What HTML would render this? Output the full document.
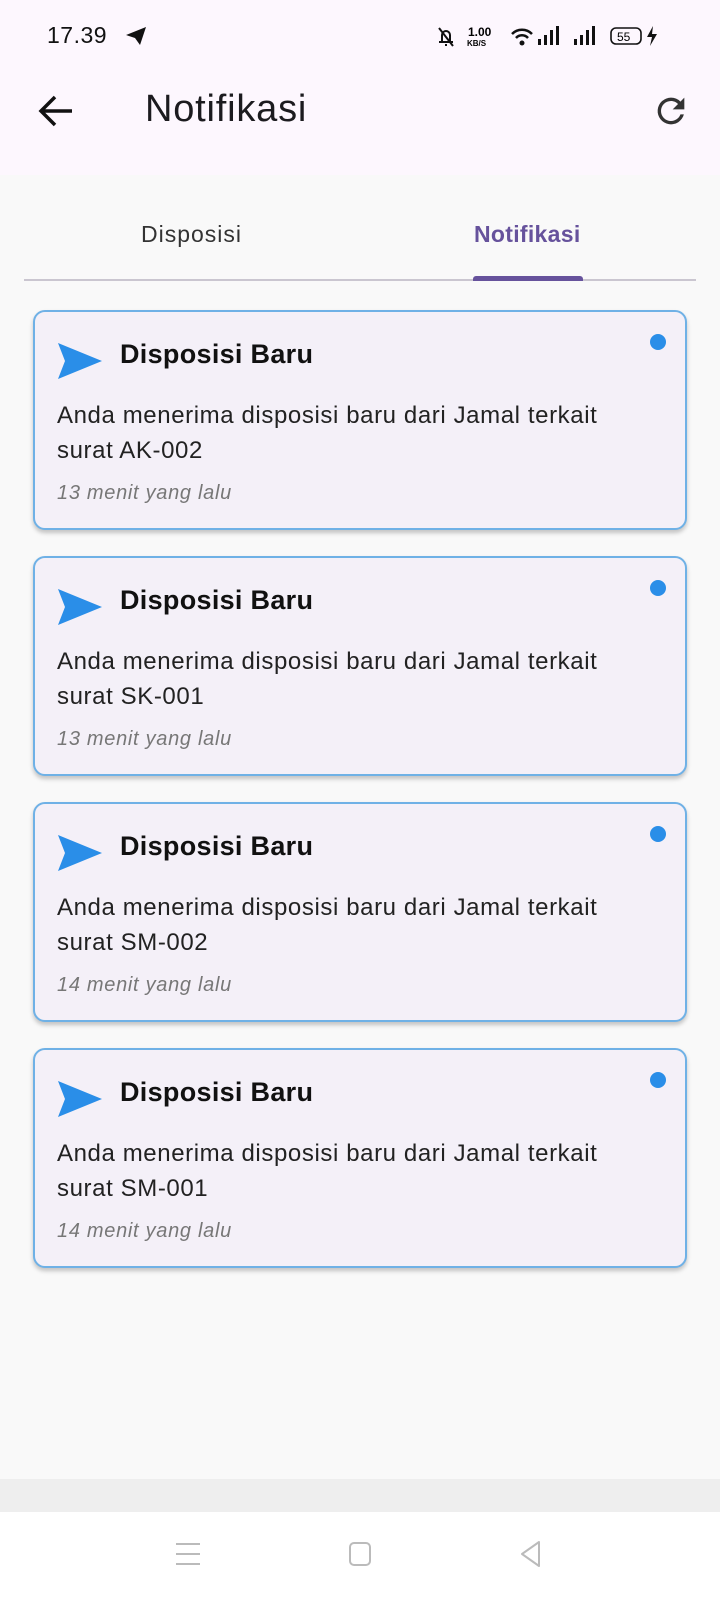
<!DOCTYPE html>
<html><head><meta charset="utf-8"><style>
*{margin:0;padding:0;box-sizing:border-box}
body{width:720px;height:1600px;overflow:hidden;font-family:"Liberation Sans",Roboto,sans-serif;background:#f9f9f9;position:relative}
.top{position:absolute;left:0;top:0;width:720px;height:175px;background:#fdf7fe}
.abs{position:absolute}
.card{position:absolute;left:33px;width:654px;height:220px;background:#f4f0f8;border:2px solid #6fb1e6;border-radius:12px;box-shadow:0 3px 4px rgba(0,0,0,0.22)}
.card .ic{position:absolute;left:22px;top:30px}
.card h3{position:absolute;left:85px;top:27px;font-size:27px;font-weight:bold;color:#111;letter-spacing:0.3px}
.card p{position:absolute;left:22px;top:86px;font-size:24px;line-height:35px;color:#222;width:590px;letter-spacing:0.6px}
.card .t{position:absolute;left:22px;top:170px;font-size:20px;font-style:italic;color:#777;letter-spacing:0.7px}
.card .dot{position:absolute;left:615px;top:22px;width:16px;height:16px;border-radius:50%;background:#2a8ee8}
</style></head><body>
<div class="top"></div>
<div class="abs" style="left:47px;top:22px;font-size:23px;color:#111;letter-spacing:0.5px">17.39</div>
<svg class="abs" style="left:125px;top:26px" width="22" height="20" viewBox="0 0 22 20"><path d="M1 9 L21 1 L15 19 L10 12 Z" fill="#111"/></svg>
<svg class="abs" style="left:436px;top:24px" width="240" height="26" viewBox="0 0 240 26">
<path d="M3 18 h14 M6 18 v-7 a4 4 0 0 1 8 0 v7 M10 20 v2 M3 4 L17 22" stroke="#111" stroke-width="2" fill="none"/>
<text x="32" y="12" font-size="12" font-weight="bold" font-family="Liberation Sans">1.00</text>
<text x="31" y="22" font-size="8" font-weight="bold" font-family="Liberation Sans">KB/S</text>
<path d="M76 10 a14 14 0 0 1 20 0 M80 14 a8 8 0 0 1 12 0" stroke="#111" stroke-width="2.5" fill="none"/><circle cx="86" cy="19" r="2.5" fill="#111"/>
<rect x="102" y="15" width="3" height="6" fill="#111"/><rect x="108" y="11" width="3" height="10" fill="#111"/><rect x="114" y="6" width="3" height="15" fill="#111"/><rect x="120" y="2" width="3" height="19" fill="#111"/>
<rect x="138" y="15" width="3" height="6" fill="#111"/><rect x="144" y="11" width="3" height="10" fill="#111"/><rect x="150" y="6" width="3" height="15" fill="#111"/><rect x="156" y="2" width="3" height="19" fill="#111"/>
<rect x="175" y="4" width="30" height="16" rx="5" fill="none" stroke="#111" stroke-width="1.6"/><text x="181" y="17" font-size="12" font-family="Liberation Sans">55</text>
<path d="M217 2 L211 13 h5 l-2 9 l7 -12 h-5 z" fill="#111"/>
</svg>
<svg class="abs" style="left:38px;top:94px" width="36" height="34" viewBox="0 0 36 34"><path d="M34 17 H4 M17 3 L3 17 L17 31" stroke="#111" stroke-width="3.5" fill="none"/></svg>
<div class="abs" style="left:145px;top:88px;font-size:38px;color:#1c1b1f;letter-spacing:0.8px">Notifikasi</div>
<svg class="abs" style="left:651px;top:91px" width="40" height="40" viewBox="0 0 24 24"><path d="M17.65 6.35A7.958 7.958 0 0 0 12 4a8 8 0 1 0 7.73 10h-2.08A5.99 5.99 0 0 1 12 18a6 6 0 1 1 0-12c1.66 0 3.14.69 4.22 1.78L13 11h7V4l-2.35 2.35z" fill="#333"/></svg>
<div class="abs" style="left:141px;top:221px;font-size:23px;color:#333;letter-spacing:1px">Disposisi</div>
<div class="abs" style="left:474px;top:221px;font-size:23px;font-weight:bold;color:#66529c;letter-spacing:0.3px">Notifikasi</div>
<div class="abs" style="left:24px;top:279px;width:672px;height:2px;background:#cac6d0"></div>
<div class="abs" style="left:473px;top:276px;width:110px;height:5px;background:#66529c;border-radius:3px 3px 0 0"></div>

<div class="card" style="top:310px"><svg class="ic" width="46" height="38" viewBox="0 0 46 38"><path d="M1 1 L45 19 L1 37 L8 19 Z" fill="#2a8ee8"/></svg><h3>Disposisi Baru</h3><div class="dot"></div><p>Anda menerima disposisi baru dari Jamal terkait surat AK-002</p><div class="t">13 menit yang lalu</div></div>
<div class="card" style="top:556px"><svg class="ic" width="46" height="38" viewBox="0 0 46 38"><path d="M1 1 L45 19 L1 37 L8 19 Z" fill="#2a8ee8"/></svg><h3>Disposisi Baru</h3><div class="dot"></div><p>Anda menerima disposisi baru dari Jamal terkait surat SK-001</p><div class="t">13 menit yang lalu</div></div>
<div class="card" style="top:802px"><svg class="ic" width="46" height="38" viewBox="0 0 46 38"><path d="M1 1 L45 19 L1 37 L8 19 Z" fill="#2a8ee8"/></svg><h3>Disposisi Baru</h3><div class="dot"></div><p>Anda menerima disposisi baru dari Jamal terkait surat SM-002</p><div class="t">14 menit yang lalu</div></div>
<div class="card" style="top:1048px"><svg class="ic" width="46" height="38" viewBox="0 0 46 38"><path d="M1 1 L45 19 L1 37 L8 19 Z" fill="#2a8ee8"/></svg><h3>Disposisi Baru</h3><div class="dot"></div><p>Anda menerima disposisi baru dari Jamal terkait surat SM-001</p><div class="t">14 menit yang lalu</div></div>

<div class="abs" style="left:0;top:1479px;width:720px;height:33px;background:#eeeeee"></div>
<div class="abs" style="left:0;top:1512px;width:720px;height:88px;background:#fff"></div>
<svg class="abs" style="left:175px;top:1541px" width="26" height="26" viewBox="0 0 26 26"><path d="M1 3 H25 M1 13 H25 M1 23 H25" stroke="#bbb" stroke-width="2"/></svg>
<svg class="abs" style="left:347px;top:1541px" width="26" height="26" viewBox="0 0 26 26"><rect x="3" y="2" width="20" height="22" rx="4" fill="none" stroke="#bbb" stroke-width="2"/></svg>
<svg class="abs" style="left:518px;top:1540px" width="26" height="28" viewBox="0 0 26 28"><path d="M21 2 L4 14 L21 26 Z" fill="none" stroke="#bbb" stroke-width="2" stroke-linejoin="round"/></svg>
</body></html>
